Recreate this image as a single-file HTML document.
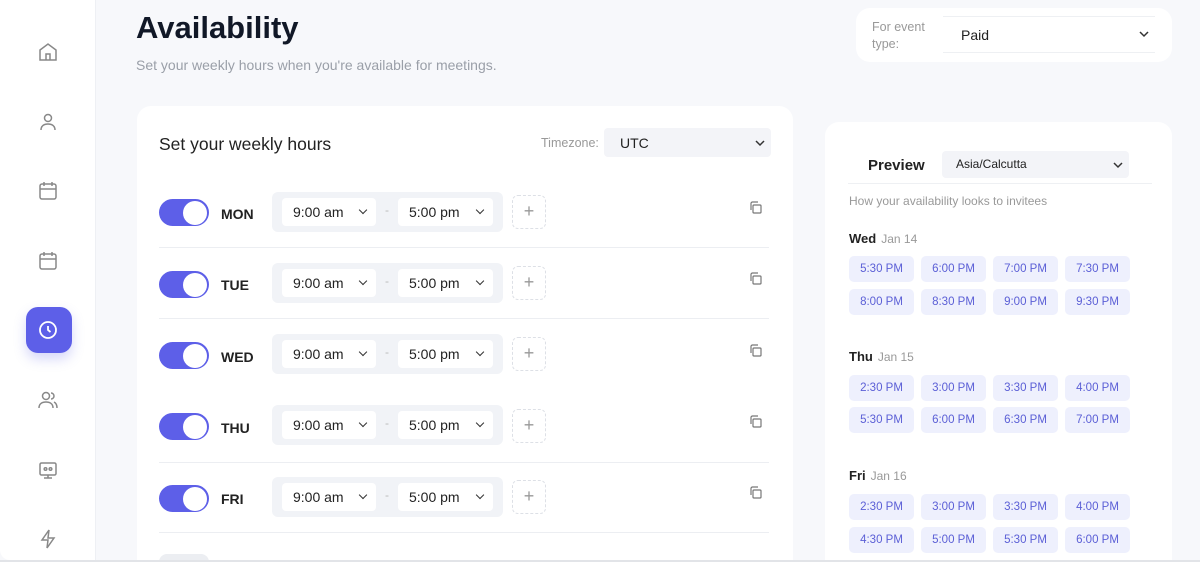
<!DOCTYPE html>
<html style="width:1200px;height:562px;overflow:hidden"><head><style>
*{box-sizing:border-box;margin:0;padding:0}
body{width:1200px;height:562px;overflow:hidden;background:#f7f8fb;font-family:"Liberation Sans",sans-serif;position:relative}
.a{position:absolute}
.side{left:0;top:0;width:96px;height:560px;background:#fff;border-right:1px solid #eef0f4;border-bottom-left-radius:10px}
.ic{position:absolute;left:36px;width:24px;height:24px}
.card{background:#fff;border-radius:14px}
.tog{position:absolute;left:159px;width:50px;height:27px;border-radius:14px;background:#5d5fe8}
.tog:after{content:"";position:absolute;right:2px;top:1.5px;width:24px;height:24px;border-radius:50%;background:#fff}
.day{position:absolute;left:221px;font-size:14px;font-weight:bold;color:#222}
.grp{position:absolute;left:272px;width:231px;height:40px;background:#f1f3f7;border-radius:6px}
.sel{position:absolute;top:6px;height:28px;background:#fff;border-radius:4px;font-size:14px;color:#222;padding:6px 0 0 11px}
.sel:after{content:"";position:absolute;right:10px;top:9px;width:5px;height:5px;border-right:1.5px solid #333;border-bottom:1.5px solid #333;transform:rotate(45deg)}
.plus{position:absolute;left:512px;width:34px;height:34px;border:1px dashed #dde0e6;border-radius:6px;color:#999;font-size:18px;text-align:center;line-height:31px}
.cp{position:absolute;left:748px;width:15px;height:15px}
.hr{position:absolute;left:159px;width:610px;height:1px;background:#eceef2}
.slot{position:absolute;width:65px;height:26px;background:#eef0fd;border-radius:5px;color:#5b5fd6;font-size:11.5px;text-align:center;line-height:26px}
.dh{position:absolute;left:849px;font-size:13px;font-weight:bold;color:#222}
.dh span{font-weight:normal;color:#999;font-size:12px;margin-left:5px}
</style></head><body>
<div class="a side"></div>
<svg class="ic" style="top:40px" viewBox="0 0 24 24" fill="none" stroke="#888" stroke-width="1.5"><path d="M4 10l8-6 8 6v10H4z"/><path d="M10 20v-6h4v6"/></svg>
<svg class="ic" style="top:110px" viewBox="0 0 24 24" fill="none" stroke="#888" stroke-width="1.5"><circle cx="12" cy="8" r="3.5"/><path d="M5 20c0-4 3-6 7-6s7 2 7 6"/></svg>
<svg class="ic" style="top:179px" viewBox="0 0 24 24" fill="none" stroke="#888" stroke-width="1.5"><rect x="4" y="5" width="16" height="15" rx="2"/><path d="M4 10h16M8 3v4M16 3v4"/></svg>
<svg class="ic" style="top:249px" viewBox="0 0 24 24" fill="none" stroke="#888" stroke-width="1.5"><rect x="4" y="5" width="16" height="15" rx="2"/><path d="M4 10h16M8 3v4M16 3v4"/></svg>
<div class="a" style="left:26px;top:307px;width:46px;height:46px;border-radius:12px;background:#5d5fe8;box-shadow:0 6px 12px rgba(93,95,232,.25)"></div>
<svg class="ic" style="top:318px" viewBox="0 0 24 24" fill="none" stroke="#fff" stroke-width="1.8"><circle cx="12" cy="12" r="8"/><path d="M12 8v4l2.5 2"/></svg>
<svg class="ic" style="top:388px" viewBox="0 0 24 24" fill="none" stroke="#888" stroke-width="1.5"><circle cx="10" cy="8" r="3.5"/><path d="M3 20c0-4 3-6 7-6s7 2 7 6M15 5a3 3 0 010 6M18 14c2 1 3 3 3 6"/></svg>
<svg class="ic" style="top:458px" viewBox="0 0 24 24" fill="none" stroke="#888" stroke-width="1.5"><rect x="4" y="5" width="16" height="12" rx="1.5"/><circle cx="9.5" cy="11" r="1.3"/><circle cx="14.5" cy="11" r="1.3"/><path d="M12 17v3M8 20h8"/></svg>
<svg class="ic" style="top:527px" viewBox="0 0 24 24" fill="none" stroke="#888" stroke-width="1.5"><path d="M13 3L6 13h6l-1 8 7-10h-6z"/></svg>

<div class="a" style="left:136px;top:10px;font-size:31px;font-weight:bold;color:#111827">Availability</div>
<div class="a" style="left:136px;top:57px;font-size:14px;color:#9a9fa8">Set your weekly hours when you're available for meetings.</div>

<div class="a card" style="left:856px;top:8px;width:316px;height:54px"></div>
<div class="a" style="left:872px;top:19px;font-size:12.5px;color:#999;line-height:17px">For event<br>type:</div>
<div class="a" style="left:943px;top:16px;width:212px;height:37px;background:#fff;border-top:1px solid #eef0f3;border-bottom:1px solid #eef0f3;font-size:14px;color:#222;padding:10px 0 0 18px">Paid<svg style="position:absolute;right:6px;top:13px" width="10" height="8" viewBox="0 0 10 8"><path d="M1 2l4 4 4-4" fill="none" stroke="#333" stroke-width="1.5"/></svg></div>

<div class="a card" style="left:137px;top:106px;width:656px;height:456px;border-bottom-left-radius:0;border-bottom-right-radius:0"></div>
<div class="a" style="left:159px;top:134px;font-size:17.5px;color:#222">Set your weekly hours</div>
<div class="a" style="left:541px;top:136px;font-size:12.5px;color:#999">Timezone:</div>
<div class="a" style="left:604px;top:128px;width:167px;height:29px;background:#f3f4f8;border-radius:4px;font-size:14px;color:#222;padding:7px 0 0 16px">UTC<svg style="position:absolute;right:6px;top:11px" width="10" height="8" viewBox="0 0 10 8"><path d="M1 2l4 4 4-4" fill="none" stroke="#333" stroke-width="1.5"/></svg></div>

<div class="tog" style="top:199px"></div><div class="day" style="top:206px">MON</div>
<div class="grp" style="top:192px"><div class="sel" style="left:10px;width:94px">9:00 am</div><div class="a" style="left:113px;top:11px;color:#bbb;font-size:12px">-</div><div class="sel" style="left:126px;width:95px">5:00 pm</div></div>
<div class="plus" style="top:195px">+</div>
<div class="hr" style="top:247px"></div>
<div class="tog" style="top:271px"></div><div class="day" style="top:277px">TUE</div>
<div class="grp" style="top:263px"><div class="sel" style="left:10px;width:94px">9:00 am</div><div class="a" style="left:113px;top:11px;color:#bbb;font-size:12px">-</div><div class="sel" style="left:126px;width:95px">5:00 pm</div></div>
<div class="plus" style="top:266px">+</div>
<div class="hr" style="top:318px"></div>
<div class="tog" style="top:342px"></div><div class="day" style="top:349px">WED</div>
<div class="grp" style="top:334px"><div class="sel" style="left:10px;width:94px">9:00 am</div><div class="a" style="left:113px;top:11px;color:#bbb;font-size:12px">-</div><div class="sel" style="left:126px;width:95px">5:00 pm</div></div>
<div class="plus" style="top:337px">+</div>
<div class="tog" style="top:413px"></div><div class="day" style="top:420px">THU</div>
<div class="grp" style="top:405px"><div class="sel" style="left:10px;width:94px">9:00 am</div><div class="a" style="left:113px;top:11px;color:#bbb;font-size:12px">-</div><div class="sel" style="left:126px;width:95px">5:00 pm</div></div>
<div class="plus" style="top:409px">+</div>
<div class="hr" style="top:462px"></div>
<div class="tog" style="top:485px"></div><div class="day" style="top:491px">FRI</div>
<div class="grp" style="top:477px"><div class="sel" style="left:10px;width:94px">9:00 am</div><div class="a" style="left:113px;top:11px;color:#bbb;font-size:12px">-</div><div class="sel" style="left:126px;width:95px">5:00 pm</div></div>
<div class="plus" style="top:480px">+</div>
<div class="hr" style="top:532px"></div>
<div class="a" style="left:159px;top:554px;width:50px;height:8px;border-radius:8px 8px 0 0;background:#eceef2"></div>

<svg class="cp" style="top:200px" viewBox="0 0 15 15" fill="none" stroke="#777" stroke-width="1.2"><rect x="5" y="5" width="8" height="8" rx="1"/><path d="M3 10V3.5C3 2.7 3.7 2 4.5 2H10"/></svg>
<svg class="cp" style="top:271px" viewBox="0 0 15 15" fill="none" stroke="#777" stroke-width="1.2"><rect x="5" y="5" width="8" height="8" rx="1"/><path d="M3 10V3.5C3 2.7 3.7 2 4.5 2H10"/></svg>
<svg class="cp" style="top:343px" viewBox="0 0 15 15" fill="none" stroke="#777" stroke-width="1.2"><rect x="5" y="5" width="8" height="8" rx="1"/><path d="M3 10V3.5C3 2.7 3.7 2 4.5 2H10"/></svg>
<svg class="cp" style="top:414px" viewBox="0 0 15 15" fill="none" stroke="#777" stroke-width="1.2"><rect x="5" y="5" width="8" height="8" rx="1"/><path d="M3 10V3.5C3 2.7 3.7 2 4.5 2H10"/></svg>
<svg class="cp" style="top:485px" viewBox="0 0 15 15" fill="none" stroke="#777" stroke-width="1.2"><rect x="5" y="5" width="8" height="8" rx="1"/><path d="M3 10V3.5C3 2.7 3.7 2 4.5 2H10"/></svg>

<div class="a card" style="left:825px;top:122px;width:347px;height:440px;border-bottom-left-radius:0;border-bottom-right-radius:0"></div>
<div class="a" style="left:868px;top:157px;font-size:15px;font-weight:bold;color:#222">Preview</div>
<div class="a" style="left:942px;top:151px;width:187px;height:27px;background:#f3f4f8;border-radius:4px;font-size:12px;color:#222;padding:6px 0 0 14px">Asia/Calcutta<svg style="position:absolute;right:6px;top:10px" width="10" height="8" viewBox="0 0 10 8"><path d="M1 2l4 4 4-4" fill="none" stroke="#333" stroke-width="1.5"/></svg></div>
<div class="a" style="left:848px;top:183px;width:304px;height:1px;background:#eef0f3"></div>
<div class="a" style="left:849px;top:194px;font-size:12px;color:#999">How your availability looks to invitees</div>

<div class="dh" style="top:231px">Wed<span>Jan 14</span></div>
<div class="slot" style="left:849px;top:256px">5:30 PM</div><div class="slot" style="left:921px;top:256px">6:00 PM</div><div class="slot" style="left:993px;top:256px">7:00 PM</div><div class="slot" style="left:1065px;top:256px">7:30 PM</div>
<div class="slot" style="left:849px;top:289px">8:00 PM</div><div class="slot" style="left:921px;top:289px">8:30 PM</div><div class="slot" style="left:993px;top:289px">9:00 PM</div><div class="slot" style="left:1065px;top:289px">9:30 PM</div>
<div class="dh" style="top:349px">Thu<span>Jan 15</span></div>
<div class="slot" style="left:849px;top:375px">2:30 PM</div><div class="slot" style="left:921px;top:375px">3:00 PM</div><div class="slot" style="left:993px;top:375px">3:30 PM</div><div class="slot" style="left:1065px;top:375px">4:00 PM</div>
<div class="slot" style="left:849px;top:407px">5:30 PM</div><div class="slot" style="left:921px;top:407px">6:00 PM</div><div class="slot" style="left:993px;top:407px">6:30 PM</div><div class="slot" style="left:1065px;top:407px">7:00 PM</div>
<div class="dh" style="top:468px">Fri<span>Jan 16</span></div>
<div class="slot" style="left:849px;top:494px">2:30 PM</div><div class="slot" style="left:921px;top:494px">3:00 PM</div><div class="slot" style="left:993px;top:494px">3:30 PM</div><div class="slot" style="left:1065px;top:494px">4:00 PM</div>
<div class="slot" style="left:849px;top:527px">4:30 PM</div><div class="slot" style="left:921px;top:527px">5:00 PM</div><div class="slot" style="left:993px;top:527px">5:30 PM</div><div class="slot" style="left:1065px;top:527px">6:00 PM</div>
<div class="a" style="left:0;top:560px;width:1200px;height:2px;background:#e2e4e8"></div>
</body></html>
